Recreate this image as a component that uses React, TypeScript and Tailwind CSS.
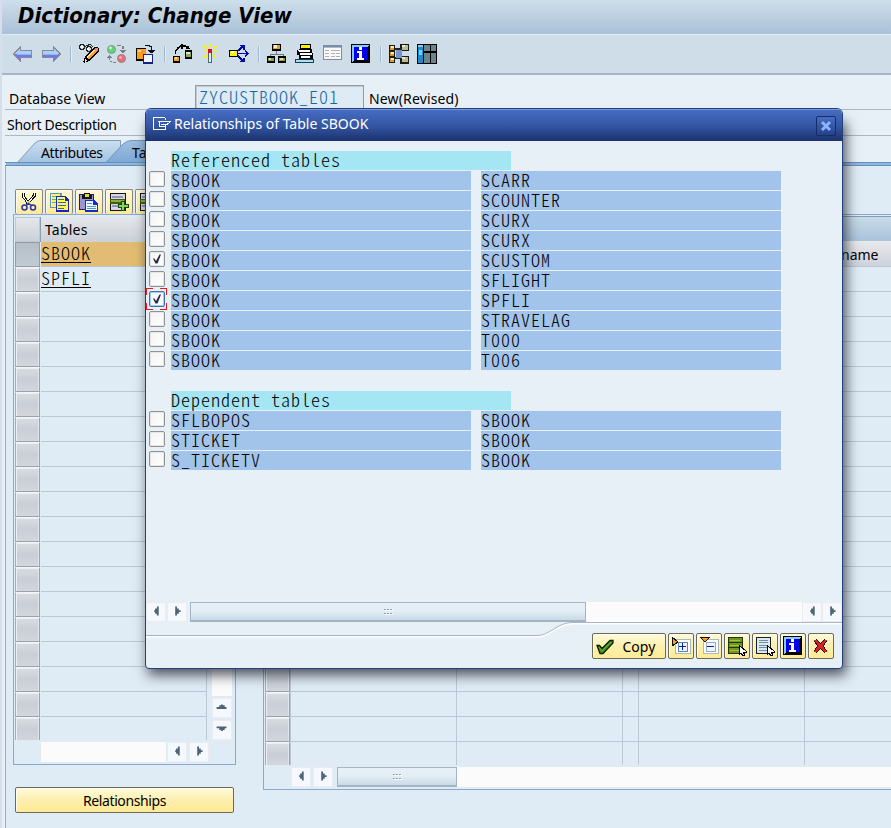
import React from "react";

const ui = "font-['Noto_Sans','Open_Sans',sans-serif]";
const mono =
  "font-['Noto_Sans_CJK_SC','Noto_Sans_CJK_JP',monospace] font-light text-[18px] tracking-[1px] [font-feature-settings:'hwid'] whitespace-pre";

function Icon({ children, className = "" }: { children: React.ReactNode; className?: string }) {
  return (
    <svg width="20" height="20" viewBox="0 0 20 20" shapeRendering="crispEdges" className={`shrink-0 ${className}`}>
      {children}
    </svg>
  );
}

const Info = () => (
  <>
    <rect width="19" height="19" fill="#000" />
    <path d="M1 1h17l-2 2H3v13l-2 2z" fill="#8cc8f4" />
    <rect x="3" y="3" width="13" height="13" fill="#0000f0" />
    <path d="M8 3h3v3H8zM6 7h5v7h2v2H6v-2h2V9H6z" fill="#fff" />
  </>
);

function Sep({ className = "" }: { className?: string }) {
  return <div className={`h-4 w-[2px] shrink-0 border-l border-[#9eb9d6] bg-[#e4edf5] ${className}`} />;
}

function Toolbar() {
  return (
    <div className="flex h-[41px] items-center border-b-2 border-[#a5b5c6] border-t border-t-[#e5edf4] bg-[#cfdde8] pl-[11px]">
      <Icon>
        <path d="M0 10 8 1v5h11v8H8v5z" fill="#868b94" />
        <path d="M2 10 7 4v3h11v3z" fill="#a9d0fa" />
        <path d="M2 10h16v3H7v4z" fill="#7474ee" />
        <path d="M3 10h15v1H4z" fill="#8eb4f2" />
      </Icon>
      <Icon className="ml-[9px]">
        <path d="M19 10 11 1v5H0v8h11v5z" fill="#868b94" />
        <path d="M17 10 12 4v3H1v3z" fill="#a9d0fa" />
        <path d="M17 10H1v3h11v4z" fill="#7474ee" />
        <path d="M16 10H1v1h14z" fill="#8eb4f2" />
      </Icon>
      <Sep className="ml-[8px]" />
      <Icon className="ml-[7px]">
        <path d="M1 .500h3v1h1v3h-1v1h-3v-1h-1v-3h1zM8 2.500h3v1h1v3h-1v1h-3v-1h-1v-3h1zM5 3.500 8 1.500 11 .500 14 2.500" fill="none" stroke="#222" />
        <path d="M2 2h2v2H2zM8 4h2v2H8z" fill="#fff" />
        <path d="m15 3 3 0 2 2v2L10 17l-5 2-1-1 2-5z" fill="#000" />
        <path d="m7 14 8-8 3 1-8 8z" fill="#ff9c18" />
        <path d="m7 13 8-8 1 1-8 8z" fill="#ffe4a0" />
        <path d="M16 4h2l1 1v2l-2 1-2-2z" fill="#ef8581" />
        <path d="m6 15 2 2-2 1z" fill="#ffe5b0" />
      </Icon>
      <Icon className="ml-[8px]">
        <g shapeRendering="auto">
          <circle cx="4.5" cy="5.5" r="4" fill="#59d878" stroke="#86928b" />
          <circle cx="3.5" cy="4" r="1.4" fill="#c1ffcd" />
          <circle cx="14.5" cy="14.5" r="4" fill="#ee6c75" stroke="#908386" />
          <circle cx="13.5" cy="13.5" r="1.3" fill="#ffc0c0" />
        </g>
        <path d="M10 1h4v1h-4zM15 2h2v3h-2zM13 6h6v1h-1v1h-1v1h-2V8h-1V7h-1zM2 11h1v1h1v1h1v1H3v2H2v-2H0v-1h1v-1h1zM3 17h2v1H3zM6 18h3v1H6z" fill="#7b8186" />
      </Icon>
      <Icon className="ml-[9px]">
        <path d="M0 4h10v13H0z" fill="#000" />
        <path d="M1 5h9v10H1z" fill="#ff9c18" />
        <path d="M2 6h3v2H2z" fill="#ffd08a" />
        <path d="M7 10h10v10H7z" fill="#17237c" />
        <path d="M8 11h8v7H8z" fill="#eef6ff" />
        <path d="M9 1h5v1h2v4h3v1h-1v1h-1v1h-3V8h-1V7h-1V6h3V3h-2V2H9z" fill="#111" />
      </Icon>
      <Sep className="ml-[8px]" />
      <Icon className="ml-[7px]">
        <path d="M0 12h7v7H0zM12 6h7v9h-7z" fill="#000" />
        <path d="M2.500 10V7L5 4 8 2h4l4 2" fill="none" stroke="#000" strokeWidth="1.500" />
        <path d="M8 0h2v5H8zM15 2h1v2h1v1h-4V4h1z" fill="#000" />
        <path d="M1 13h5v4H1z" fill="#ff9e1e" />
        <path d="M2 13h2v2H2z" fill="#ffd9a0" />
        <path d="M13 8h5v5h-5z" fill="#91a653" />
        <path d="M13 8h4v2h-4z" fill="#dce5bb" />
      </Icon>
      <Icon className="ml-[8px]">
        <path d="M9 0v3M2 7.500h4M12 7.500h4M3 2l3 3M15 2l-3 3M3 14l3-3M15 14l-3-3" stroke="#fff200" strokeWidth="1.5" />
        <rect x="7" y="9" width="4" height="10" fill="#50676e" />
        <rect x="8" y="9" width="2" height="9" fill="#d8edf2" />
        <rect x="7" y="5" width="4" height="4" fill="#e00a12" />
      </Icon>
      <Icon className="ml-[8px]">
        <path d="M8 9.500h11M9 7l5-5M9 12l5 5M16 6.500l3 3-3 3M11 1.500h4v4M11 17.500h4v-4" fill="none" stroke="#0808a8" strokeWidth="1.5" />
        <path d="M0 6h9v7H0z" fill="#000" />
        <path d="M1 7h7v5H1z" fill="#fff200" />
        <path d="M2 7h3v2H2z" fill="#fff" />
      </Icon>
      <Sep className="ml-[9px]" />
      <Icon className="ml-[7px]">
        <path d="M5 0h9v7H5zM0 12h8v7H0zM11 12h8v7h-8z" fill="#000" />
        <path d="M9 7v3M3 12v-2h13v2" fill="none" stroke="#717b80" />
        <path d="M6 1h7v4H6z" fill="#e59d2f" />
        <path d="M7 1h3v3H7z" fill="#fff0ba" />
        <path d="M1 14h6v3H1zM12 14h6v3h-6z" fill="#8aa344" />
        <path d="M2 14h2v2H2zM13 14h3v2h-3z" fill="#d7e1ac" />
      </Icon>
      <Icon className="ml-[8px]">
        <path d="M5 0h11v5h1v4h1v6H4v-4H2V6h2V5h1z" fill="#000" />
        <path d="M6 1h9v3H6z" fill="#fff000" />
        <path d="M3 6h12v2H4zM5 9h12v2H5zM6 12h9v2H6z" fill="#fff" />
        <path d="M0 15h19v4H0z" fill="#133f50" />
        <path d="M1 16h17v2H1z" fill="#a9e0f5" />
      </Icon>
      <Icon className="ml-[8px]">
        <path d="M0 1h19v15H0z" fill="#858b91" />
        <path d="M1 4h17v11H1z" fill="#fafafa" />
        <path d="M1 3h17v1H1z" fill="#95c2e8" />
        <path d="M2 6h4v1H2zM2 9h4v1H2zM2 12h4v1H2zM8 6h9v1H8zM8 9h4v1H8zM13 9h4v1h-4zM8 12h4v1H8zM13 12h4v1h-4z" fill="#adb2b5" />
      </Icon>
      <Icon className="ml-[8px]"><Info /></Icon>
      <Sep className="ml-[9px]" />
      <Icon className="ml-[7px]">
        <path d="M0 1h6v18H0zM11 0h9v7h-9zM11 12h9v8h-9z" fill="#1b1b13" />
        <path d="M5 4h8v2H5zM5 13h8v2H5z" fill="#222" />
        <path d="M1 2h4v4H1zM1 8h4v4H1zM1 14h4v4H1z" fill="#d59a38" />
        <path d="M2 2h3v2H2zM2 8h3v2H2zM2 14h3v2H2z" fill="#fff0ad" />
        <path d="M7 6h6v8H7z" fill="#7796c9" />
        <path d="M13 1h6v5h-6zM13 13h6v5h-6z" fill="#b6bd96" />
        <path d="M13 1h3v2h-3zM13 13h3v2h-3z" fill="#edf0d4" />
      </Icon>
      <Icon className="ml-[8px]">
        <path d="M0 0h20v20H0z" fill="#000" />
        <path d="M1 2h5v17H1z" fill="#168ed0" />
        <path d="M1 1h5v2H1z" fill="#81ccef" />
        <path d="M7 1h6v6H7zM14 1h5v6h-5zM7 9h6v10H7zM14 9h5v10h-5z" fill="#6c848e" />
        <path d="M2 6h3v5H2z" fill="#63d8ff" />
      </Icon>
    </div>
  );
}

type Dir = "left" | "right" | "up" | "down";

function ScrollButton({ dir, className = "" }: { dir: Dir; className?: string }) {
  const d = {
    left: "M13 4v10h-2v-2H9v-2H8V8h1V6h2V4z",
    right: "M8 4v10h2v-2h2v-2h2V8h-2V6h-2V4z",
    up: "M4 11h11V9h-2V7h-2V6H9v1H7v2H4z",
    down: "M4 6h11v2h-2v2h-2v1H9v-1H7V8H4z",
  }[dir];
  return (
    <div className={`h-5 w-5 shrink-0 border border-[#e9edf2] bg-[#f5f8fc] ${className}`}>
      <svg width="18" height="18" viewBox="0 0 20 20"><path d={d} fill="#4d6475" /></svg>
    </div>
  );
}

function Thumb({ className = "" }: { className?: string }) {
  return (
    <div className={`flex h-5 shrink-0 items-center justify-center border border-[#a4b4c3] border-b-2 bg-linear-to-b from-[#e8f0f8] via-[#e2edf5] to-[#c9dae7] ${className}`}>
      <svg width="9" height="7" viewBox="0 0 9 7" shapeRendering="crispEdges">
        <path d="M0 1h2v1H0zM3 1h2v1H3zM6 1h2v1H6zM0 5h2v1H0zM3 5h2v1H3zM6 5h2v1H6z" fill="#93a5b4" />
        <path d="M1 2h2v1H1zM4 2h2v1H4zM7 2h2v1H7zM1 6h2v1H1zM4 6h2v1H4zM7 6h2v1H7z" fill="#fff" />
      </svg>
    </div>
  );
}

function Tabs() {
  return (
    <svg width="886" height="28" viewBox="5 138 886 28" className="block">
      <defs>
        <linearGradient id="inactive" x1="0" y1="0" x2="0" y2="1">
          <stop stopColor="#cbdfee" /><stop offset="1" stopColor="#a3c3e2" />
        </linearGradient>
        <linearGradient id="active" x1="0" y1="0" x2="0" y2="1">
          <stop stopColor="#9dbfe0" /><stop offset="1" stopColor="#7da8d5" />
        </linearGradient>
      </defs>
      <path d="M17.500 162.500 35 143q3-2.500 6-2.500H120.500V162.500z" fill="url(#inactive)" stroke="#7d9dbd" />
      <path d="M106 162.500 123 144q4-3.500 8-3.500H200V163z" fill="url(#active)" stroke="#6f97c1" />
      <path d="M5 162.500H891M5 165.500H891" stroke="#688fb9" />
      <path d="M6 163h885v2H6z" fill="#8fb6dd" />
      <text x="41" y="158" fontSize="14" textLength="62" className={ui} fill="#000">Attributes</text>
      <text x="132" y="158" fontSize="14" className={ui} fill="#000">Tables</text>
    </svg>
  );
}

function ToolButton({ children }: { children: React.ReactNode }) {
  return (
    <div className="flex h-[25px] w-7 shrink-0 items-center justify-center rounded-[2px] border border-b-0 border-[#8b867a] bg-linear-to-b from-[#fff9d5] to-[#fce998] shadow-[inset_1px_1px_0_#fffce9]">
      {children}
    </div>
  );
}

const RowAdd = () => (
  <>
    <path d="M1 1h16v18H1z" fill="#151515" />
    <path d="M2 2h14v16H2z" fill="#d5d8e7" />
    <path d="M3 4h11v2H3zM3 13h8v2H3z" fill="#9293c0" />
    <path d="M1 7h15v5H1z" fill="#405d12" />
    <path d="M2 8h13v2H2z" fill="#8fac40" />
    <path d="M12 9h4v3h4v4h-4v3h-4v-3H9v-4h3z" fill="#174b13" />
    <path d="M13 10h2v3h4v2h-4v3h-2v-3h-3v-2h3z" fill="#8bd357" />
  </>
);

function EditTools() {
  return (
    <div className="flex gap-[2px]">
      <ToolButton><Icon>
        <path d="M4 1v3l6 8M15 1v3L8 12" stroke="#111" strokeWidth="3" fill="none" />
        <path d="M4 1v3l5 7M15 1v3L9 11" stroke="#efffff" strokeWidth="1" fill="none" />
        <path d="M8 9h3v3H8z" fill="#e6df35" />
        <g shapeRendering="auto" fill="none" stroke="#2734a4" strokeWidth="1.5">
          <circle cx="5.5" cy="15.5" r="2.500" /><circle cx="14" cy="15.500" r="2.500" />
          <path d="M7 13.500 9.500 11.500 12.500 13.500" />
        </g>
      </Icon></ToolButton>
      <ToolButton><Icon>
        <path d="M1 1h12v15H1z" fill="#5d95bd" /><path d="M2 2h9v13H2z" fill="#fff36f" />
        <path d="M3 4h6v1H3zM3 7h6v1H3zM3 10h6v1H3z" fill="#58aab7" />
        <path d="M7 4h9l4 4v12H7z" fill="#1827ba" /><path d="M8 5h8v4h3v9H8z" fill="#fff557" />
        <path d="M9 7h6v1H9zM9 10h8v1H9zM9 13h8v1H9zM9 16h6v1H9z" fill="#3a61bb" />
      </Icon></ToolButton>
      <ToolButton><Icon>
        <path d="M0 2h15v16H0z" fill="#202063" /><path d="M1 3h13v14H1z" fill="#9a96d3" />
        <path d="M3 3h10v4H3z" fill="#151515" /><path d="M5 1h6v5H5z" fill="#151515" /><path d="M6 2h4v3H6z" fill="#e5dc31" />
        <path d="M6 8h9l4 4v8H6z" fill="#172acb" /><path d="M7 9h7v4h4v5H7z" fill="#edf8ff" />
        <path d="M8 11h5v1H8zM8 14h9v1H8zM8 16h9v1H8z" fill="#4d9acf" />
      </Icon></ToolButton>
      <ToolButton><Icon><RowAdd /></Icon></ToolButton>
      <ToolButton><Icon><RowAdd /></Icon></ToolButton>
    </div>
  );
}

const cap = "border border-[#98a3b0] border-t-[#f3f4f6] border-l-[#a4adb7] bg-linear-to-b from-[#d9dde2] via-[#c9ced7] to-[#d3d6dc] shadow-[inset_1px_1px_0_#edf0f3,inset_-1px_0_0_#e1e4e8]";

function LeftTable() {
  const rows = ["SBOOK", "SPFLI", ...Array(18).fill("")];
  return (
    <div className="h-[551px] w-[223px] border border-[#8aa9cb] pt-[2px] pl-px">
      <div className="flex h-[523px]">
        <div className="w-[192px] overflow-hidden">
          <div className={`${ui} flex h-[25px]`}>
            <div className="w-[25px] border border-[#c0c7ce] bg-linear-to-b from-[#e5e8ec] to-[#cbd0d7]" />
            <div className="flex-1 border-l border-[#8f9eae] bg-linear-to-b from-[#e4e7eb] to-[#ccd1d8] pl-[4px] text-[14px] leading-[25px] tracking-[0.2px]">Tables</div>
          </div>
          {rows.map((row, i) => (
            <div key={i} className="flex h-[25px]">
              <div className={`w-[25px] shrink-0 ${i === 0 ? "border border-[#929da8] bg-linear-to-b from-[#b4bfc8] to-[#c1cbd3]" : cap}`} />
              <div className={`ml-px flex-1 border-r border-b border-[#b9c8d6] ${i === 0 ? "bg-[#e2bc72]" : ""}`}>
                {row && <span className={`${mono} block h-[21px] w-[50px] border-b border-black leading-[20px]`}>{row}</span>}
              </div>
            </div>
          ))}
        </div>
        <div className="ml-[5px] flex w-5 flex-col gap-[2px]">
          <div className="h-[479px] bg-[#fbfbfb]" />
          <ScrollButton dir="up" />
          <ScrollButton dir="down" />
        </div>
      </div>
      <div className="mt-[2px] flex pl-[26px]">
        <div className="h-5 w-[125px] bg-[#fbfbfb]" />
        <ScrollButton dir="left" className="ml-px" />
        <ScrollButton dir="right" className="ml-[2px]" />
      </div>
    </div>
  );
}

function RightTable() {
  return (
    <div className="h-[576px] w-[628px] overflow-hidden border border-r-0 border-[#8aa9cb] pt-px pl-px">
      <div className="h-[25px] border-t border-[#829dbb] bg-linear-to-b from-[#c9dbe8] to-[#a9c3dc]" />
      <div className="h-[524px] overflow-hidden">
        {Array.from({ length: 21 }, (_, i) => (
          <div key={i} className={`flex ${i === 0 ? "h-[26px] bg-linear-to-b from-[#e8e9eb] to-[#cdd1dc]" : "h-[25px]"}`}>
            <div className={`w-[25px] ${cap}`} />
            <div className="w-[167px] border-x border-b border-[#b9c8d6]" />
            <div className="w-[166px] border-r border-b border-[#b9c8d6]" />
            <div className="w-4 border-r border-b border-[#b9c8d6]" />
            <div className="w-[166px] border-r border-b border-[#b9c8d6]" />
            <div className={`${ui} flex-1 border-b border-[#b9c8d6] pl-[5px] text-[14px] leading-[27px]`}>{i === 0 ? "Fieldname" : ""}</div>
          </div>
        ))}
      </div>
      <div className="mt-[2px] flex">
        <ScrollButton dir="left" className="ml-[26px]" />
        <ScrollButton dir="right" className="ml-[2px]" />
        <Thumb className="ml-[4px] w-[120px]" />
        <div className="h-5 flex-1 bg-[#fbfbfb]" />
      </div>
    </div>
  );
}

function Check({ on, focus }: { on?: boolean; focus?: boolean }) {
  return (
    <div className={`relative h-4 w-4 rounded-[2px] border bg-linear-to-br from-[#f2f3f4] to-white ${focus ? "border-[#3975b5] shadow-[inset_0_0_0_1px_#a8c9e9]" : "border-[#929292] shadow-[inset_0_0_0_1px_#e3e5e7]"}`}>
      {on && (
        <svg width="14" height="14" viewBox="0 0 14 14" className="block">
          <path d="M3 6.500h1.500L6 9l3.500-6.500H11L7.500 11.500H5.500z" fill="#292944" />
        </svg>
      )}
      {focus && (
        <svg width="21" height="22" viewBox="0 0 21 22" className="absolute -top-1 -left-1" shapeRendering="crispEdges">
          <path d="M7 .5H.5V7M14 .5h6.500V7M.5 15v6.500H7M20.500 15v6.500H14" fill="none" stroke="#e31b1b" />
        </svg>
      )}
    </div>
  );
}

function DialogRow({ a, b, on, focus }: { a: string; b: string; on?: boolean; focus?: boolean }) {
  return (
    <div className="flex h-5">
      <div className="w-[22px]"><Check on={on} focus={focus} /></div>
      <div className={`${mono} h-[19px] w-[300px] bg-[#a2c3ea] leading-[17px]`}>{a}</div>
      <div className={`${mono} ml-[10px] h-[19px] w-[300px] bg-[#a2c3ea] leading-[17px]`}>{b}</div>
    </div>
  );
}

function YButton({ children, className = "" }: { children: React.ReactNode; className?: string }) {
  return (
    <div className={`flex h-[26px] items-center justify-center rounded-[2px] border border-[#6d6957] bg-linear-to-b from-[#fffbdc] via-[#fdefae] to-[#ffeb96] shadow-[inset_1px_1px_0_#fffdea] ${className}`}>
      {children}
    </div>
  );
}

function Cursor() {
  return <path d="M12 9v10l2-2 2 3 2-1-2-3h4z" fill="#fff" stroke="#000" />;
}

function Dialog() {
  const refs = ["SCARR", "SCOUNTER", "SCURX", "SCURX", "SCUSTOM", "SFLIGHT", "SPFLI", "STRAVELAG", "T000", "T006"];
  return (
    <div className="absolute top-[108px] left-[143px] flex h-[561px] w-[698px] flex-col overflow-hidden rounded-t-[6px] rounded-b-[4px] border border-[#233f7c] bg-[#e8f0f7]">
      <div className="flex h-8 shrink-0 items-center border-t border-[#7897d7] bg-linear-to-b from-[#466cc3] via-[#3457a5] to-[#1b326e] pl-[7px]">
        <svg width="18" height="14" viewBox="0 0 18 14" fill="none" stroke="#fff" shapeRendering="crispEdges" className="-mt-[3px]">
          <path d="M12 .5H.5v12H12V10M12 .5V3M5 4.500h13L14 7.500h-2v2H6.500v-5M8 7.500h5" />
        </svg>
        <span className={`${ui} -mt-[4px] ml-[3px] text-[14px] whitespace-nowrap text-white`}>Relationships of Table SBOOK</span>
        <div className="mr-[6px] ml-auto flex h-5 w-5 items-center justify-center rounded-[2px] border border-[#162c65] bg-linear-to-b from-[#466dc4] to-[#234388]">
          <svg width="12" height="12" viewBox="0 0 12 12"><path d="m2 2 8 8M10 2l-8 8" stroke="#8fb1ff" strokeWidth="3" /></svg>
        </div>
      </div>
      <div className="flex flex-1 flex-col pt-[10px] pl-[3px]">
        <div className={`${mono} ml-[22px] h-[19px] w-[340px] shrink-0 bg-[#a5e6f4] leading-[17px]`}>Referenced tables</div>
        <div className="h-px shrink-0" />
        {refs.map((r, i) => <DialogRow key={i} a="SBOOK" b={r} on={i === 4 || i === 6} focus={i === 6} />)}
        <div className={`${mono} mt-5 ml-[22px] h-[19px] w-[340px] shrink-0 bg-[#a5e6f4] leading-[17px]`}>Dependent tables</div>
        <div className="h-px shrink-0" />
        {["SFLBOPOS", "STICKET", "S_TICKETV"].map((t) => <DialogRow key={t} a={t} b="SBOOK" />)}
      </div>
      <div className="flex shrink-0">
        <ScrollButton dir="left" />
        <ScrollButton dir="right" className="ml-px" />
        <Thumb className="ml-[3px] w-[396px]" />
        <div className="h-5 flex-1 bg-[#fbfbfb]" />
        <ScrollButton dir="left" />
        <ScrollButton dir="right" />
      </div>
      <div className="relative flex h-[46px] shrink-0 items-end gap-[2px] pr-[8px] pb-[9px]">
        <svg width="696" height="18" viewBox="0 0 696 18" fill="none" className="absolute top-0 left-0">
          <path d="M0 14.500h392c11 0 20-13 34-13h270" stroke="#fff" strokeWidth="2" />
          <path d="M0 13.500h392c11 0 20-13 34-13h270" stroke="#a6b6c8" />
        </svg>
        <YButton className="ml-auto w-[74px]">
          <Icon className="-ml-[7px]">
            <g shapeRendering="auto">
              <path d="M2 9.500h2.500L7 12.500l8-8h3V7L8 17.500H5z" fill="#3f9a18" stroke="#101b0b" strokeWidth="1.300" />
              <path d="m4 11 3 4 9-9" fill="none" stroke="#5cae2c" />
            </g>
          </Icon>
          <span className={`${ui} ml-[8px] w-[34px] text-[14px]`}>Copy</span>
        </YButton>
        <YButton className="w-[26px]"><Icon>
          <path d="M4 3h15v14H4z" fill="#fff" stroke="#aab9c0" /><path d="M7 6h9v9H7z" fill="#eef4ff" stroke="#5784bd" />
          <path d="M8 10.500h7M11.500 7v7" stroke="#111e8a" /><path d="M1 1l6 5-6 4z" fill="#ff9a17" stroke="#111" />
        </Icon></YButton>
        <YButton className="w-[26px]"><Icon>
          <path d="M4 3h15v14H4z" fill="#fff" stroke="#aab9c0" /><path d="M7 6h9v9H7z" fill="#eef4ff" stroke="#93a8cc" />
          <path d="M8 10.500h7" stroke="#111e8a" /><path d="M1 1h10L6 6z" fill="#ff9a17" stroke="#111" />
        </Icon></YButton>
        <YButton className="w-[26px]"><Icon>
          <path d="M1 1h15v17H1z" fill="#20370b" /><path d="M2 2h13v4H2zM2 7h13v4H2zM2 12h13v5H2z" fill="#72951c" />
          <path d="M3 4h10M3 9h10M3 14h9" stroke="#a8c33c" /><Cursor />
        </Icon></YButton>
        <YButton className="w-[26px]"><Icon>
          <path d="M1 1h15v17H1z" fill="#192229" /><path d="M2 2h13v15H2z" fill="#dbe9ef" />
          <path d="M4 4h9v1H4zM4 6h9v1H4zM4 9h9v1H4zM4 11h9v1H4zM4 14h8v1H4z" fill="#6d8fa3" /><Cursor />
        </Icon></YButton>
        <YButton className="w-[26px]"><Icon><Info /></Icon></YButton>
        <YButton className="w-[26px]"><Icon>
          <path d="m4 4 11 12M15 4 4 16" stroke="#161013" strokeWidth="4" /><path d="m4 4 11 12M15 4 4 16" stroke="#df1f28" strokeWidth="2.500" />
        </Icon></YButton>
      </div>
    </div>
  );
}

export default function App() {
  return (
    <div className={`${ui} relative flex h-[828px] w-[891px] flex-col overflow-hidden border-l-2 border-[#d5deea] bg-[#e8f0f7] text-black`}>
      <div className="flex h-[34px] shrink-0 items-center bg-linear-to-b from-[#cddfeb] via-[#bdcfdf] to-[#a9c1d9] pb-[2px] pl-[16px]">
        <h1 className="font-['DejaVu_Sans_Condensed','DejaVu_Sans',sans-serif] text-[22px] leading-[30px] font-bold whitespace-nowrap italic">Dictionary: Change View</h1>
      </div>
      <Toolbar />
      <div className="ml-[3px] flex h-[35px] shrink-0 items-end border-b border-[#afb6be] text-[14px]">
        <span className="w-[190px] pl-[4px] leading-[20px]">Database View</span>
        <div className={`${mono} h-6 w-[169px] border border-b-0 border-[#969ca2] bg-[#deeaf4] pl-[3px] leading-[21px] text-[#1269a6] shadow-[inset_1px_1px_0_#c1cbd4]`}>ZYCUSTBOOK_E01</div>
        <span className="ml-[5px] leading-[20px] tracking-[0.15px]">New(Revised)</span>
      </div>
      <div className="ml-[3px] h-[26px] shrink-0 border-b border-[#afb6be] pl-[2px] text-[14px] leading-[29px] tracking-[-0.3px]">Short Description</div>
      <div className="ml-[3px] shrink-0 pt-[2px]"><Tabs /></div>
      <div className="ml-[3px] flex flex-1 border-l border-[#91add0] bg-[#dfebf5]">
        <div className="flex w-[257px] flex-col pt-[23px] pl-[7px]">
          <div className="pl-[2px]"><EditTools /></div>
          <LeftTable />
          <YButton className="mt-[22px] ml-[2px] w-[219px] text-[14px] tracking-[-0.4px]">Relationships</YButton>
        </div>
        <div className="pt-[48px]"><RightTable /></div>
      </div>
      <div className="absolute top-[122px] left-[147px] h-[545px] w-[690px] shadow-[3px_4px_12px_4px_rgba(25,30,40,0.75)]" />
      <Dialog />
    </div>
  );
}
